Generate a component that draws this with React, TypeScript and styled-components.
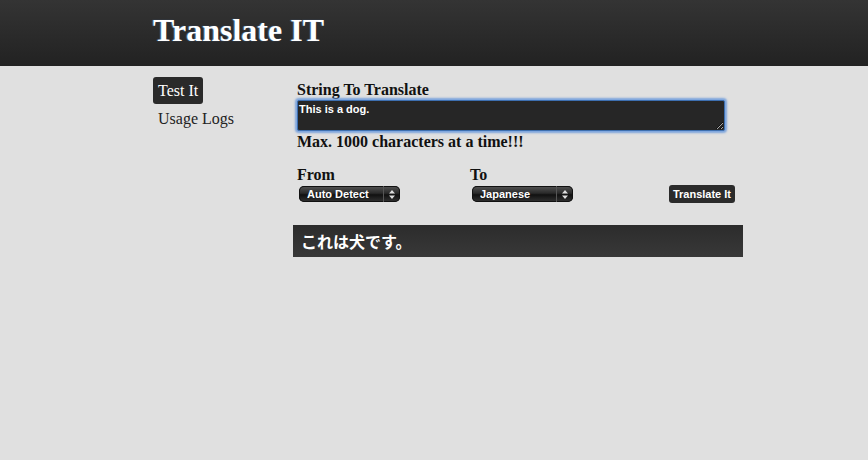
import React from "react";
import styled, { createGlobalStyle } from "styled-components";

const Global = createGlobalStyle`
  html, body { margin: 0; padding: 0; background: #e0e0e0; }
  body { font-family: "Liberation Serif", "Times New Roman", serif; color: #111; }
`;

const Header = styled.header`
  height: 66px;
  background: linear-gradient(#343434, #222222);
  display: flex;
  align-items: center;
  padding-left: 153px;
`;

const Title = styled.h1`
  margin: 0;
  font-family: "Liberation Serif", serif;
  font-weight: bold;
  font-size: 32px;
  color: #fff;
  text-shadow: -1px 0 1px rgba(90, 150, 230, 0.7);
  position: relative;
  top: -3px;
`;

const Body = styled.div`
  display: flex;
  padding-left: 153px;
  padding-top: 11px;
`;

const Sidebar = styled.nav`
  width: 140px;
  display: flex;
  flex-direction: column;
  align-items: flex-start;
`;

const NavItem = styled.a<{ $active?: boolean }>`
  font-size: 16px;
  line-height: 19px;
  padding: 4px 5px;
  border-radius: 3px;
  color: ${(p) => (p.$active ? "#fff" : "#222")};
  background: ${(p) => (p.$active ? "#2a2a2a" : "transparent")};
  text-decoration: none;
  margin-bottom: ${(p) => (p.$active ? "1px" : "0")};
`;

const Main = styled.main`
  width: 450px;
  display: flex;
  flex-direction: column;
  padding-top: 4px;
`;

const Label = styled.div`
  font-weight: bold;
  font-size: 16px;
  line-height: 18px;
  padding-left: 4px;
`;

const TextArea = styled.textarea`
  margin: 1px 0 0 4px;
  width: 428px;
  height: 31px;
  box-sizing: border-box;
  background: #262626;
  color: #fff;
  border: 1px solid #3d6fb0;
  border-radius: 2px;
  box-shadow: 0 0 2px 2px rgba(100, 150, 220, 0.8);
  font-family: "Liberation Sans", Arial, sans-serif;
  font-weight: bold;
  font-size: 11px;
  line-height: 13px;
  padding: 2px 1px;
  outline: none;
`;

const Note = styled.div`
  font-weight: bold;
  font-size: 16px;
  line-height: 18px;
  padding-left: 4px;
  margin-top: 2px;
`;

const Controls = styled.div`
  display: flex;
  align-items: flex-end;
  margin-top: 16px;
  padding-left: 4px;
`;

const Field = styled.div`
  width: 173px;
  display: flex;
  flex-direction: column;
`;

const FieldLabel = styled.div`
  font-weight: bold;
  font-size: 16px;
  line-height: 16px;
`;

const SelectWrap = styled.div`
  margin-left: 2px;
  margin-top: 3px;
  width: 101px;
  height: 16px;
  display: flex;
  border-radius: 5px;
  background: linear-gradient(#555 0%, #2a2a2a 45%, #111 55%, #333 100%);
  box-shadow: inset 0 0 0 1px #111;
  overflow: hidden;
`;

const Select = styled.select`
  appearance: none;
  -webkit-appearance: none;
  flex: 1;
  min-width: 0;
  border: none;
  background: transparent;
  color: #fff;
  font-family: "Liberation Sans", Arial, sans-serif;
  font-weight: bold;
  font-size: 11px;
  padding: 0 0 0 8px;
  height: 16px;
  outline: none;
`;

const Arrows = styled.div`
  width: 16px;
  border-left: 1px solid #555;
  display: flex;
  align-items: center;
  justify-content: center;
`;

const Button = styled.button`
  margin-left: auto;
  margin-right: 8px;
  background: #2b2b2b;
  color: #fff;
  border: none;
  border-radius: 3px;
  font-family: "Liberation Sans", Arial, sans-serif;
  font-weight: bold;
  font-size: 11px;
  height: 18px;
  padding: 0 4px;
  margin-bottom: -1px;
`;

const Result = styled.div`
  margin-top: 23px;
  height: 32px;
  background: linear-gradient(#2c2c2c, #383838);
  color: #fff;
  display: flex;
  align-items: center;
  padding-left: 8px;
  font-family: "Noto Sans CJK JP", sans-serif;
  font-weight: bold;
  font-size: 16px;
`;

const ArrowIcon = () => (
  <svg width="6" height="9" viewBox="0 0 6 9">
    <path d="M3 0 L6 3.5 H0 Z M3 9 L6 5.5 H0 Z" fill="#ddd" />
  </svg>
);

const LangSelect = ({ value }: { value: string }) => (
  <SelectWrap>
    <Select defaultValue={value}>
      <option>{value}</option>
    </Select>
    <Arrows>
      <ArrowIcon />
    </Arrows>
  </SelectWrap>
);

export default function App() {
  return (
    <>
      <Global />
      <Header>
        <Title>Translate IT</Title>
      </Header>
      <Body>
        <Sidebar>
          <NavItem $active href="#">Test It</NavItem>
          <NavItem href="#">Usage Logs</NavItem>
        </Sidebar>
        <Main>
          <Label>String To Translate</Label>
          <TextArea defaultValue="This is a dog." />
          <Note>Max. 1000 characters at a time!!!</Note>
          <Controls>
            <Field>
              <FieldLabel>From</FieldLabel>
              <LangSelect value="Auto Detect" />
            </Field>
            <Field>
              <FieldLabel>To</FieldLabel>
              <LangSelect value="Japanese" />
            </Field>
            <Button>Translate It</Button>
          </Controls>
          <Result>これは犬です。</Result>
        </Main>
      </Body>
    </>
  );
}
